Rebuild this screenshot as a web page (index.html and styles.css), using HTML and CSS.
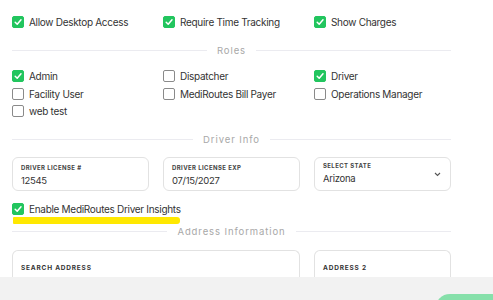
FILE: index.html
```html
<!DOCTYPE html>
<html lang="en">
<head>
    <meta charset="UTF-8">
    <meta name="viewport" content="width=device-width, initial-scale=1.0">
    <title>Driver Settings</title>
    <link rel="stylesheet" href="styles.css">
</head>
<body>

    <div class="page">

        <!-- Access options -->
        <div class="grid top-row">
            <label class="check"><span class="box on"></span>Allow Desktop Access</label>
            <label class="check"><span class="box on"></span>Require Time Tracking</label>
            <label class="check"><span class="box on"></span>Show Charges</label>
        </div>

        <!-- Roles -->
        <div class="divider roles-title">Roles</div>
        <div class="grid roles">
            <label class="check"><span class="box on"></span>Admin</label>
            <label class="check"><span class="box"></span>Dispatcher</label>
            <label class="check"><span class="box on"></span>Driver</label>
            <label class="check"><span class="box"></span>Facility User</label>
            <label class="check"><span class="box"></span>MediRoutes Bill Payer</label>
            <label class="check"><span class="box"></span>Operations Manager</label>
            <label class="check"><span class="box"></span>web test</label>
        </div>

        <!-- Driver Info -->
        <div class="divider driver-title">Driver Info</div>
        <div class="grid fields">
            <div class="field">
                <div class="field-label">Driver License #</div>
                <div class="field-value">12545</div>
            </div>
            <div class="field">
                <div class="field-label">Driver License Exp</div>
                <div class="field-value">07/15/2027</div>
            </div>
            <div class="field select">
                <div>
                    <div class="field-label">Select State</div>
                    <div class="field-value">Arizona</div>
                </div>
                <svg class="chevron" width="7" height="5" viewBox="0 0 7 5"><path d="M1 1l2.5 2.5L6 1" fill="none" stroke="#555" stroke-width="1.1"/></svg>
            </div>
        </div>

        <div class="insights">
            <label class="check"><span class="box on"></span>Enable MediRoutes Driver Insights</label>
            <div class="marker"></div>
        </div>

        <!-- Address Information -->
        <div class="divider address-title">Address Information</div>
        <div class="grid address">
            <div class="field tall wide">
                <div class="field-label">Search Address</div>
            </div>
            <div class="field tall">
                <div class="field-label">Address 2</div>
            </div>
        </div>

    </div>

    <!-- Footer bar -->
    <div class="footer">
        <div class="save-btn"></div>
    </div>

</body>
</html>
```

FILE: styles.css
```css
body, html {
    margin: 0;
    padding: 0;
    font-family: 'Inter', 'Noto Sans', sans-serif;
    color: #333;
    background: #fff;
    overflow: hidden;
}

.page {
    width: 439px;
    padding: 0 12px;
}

.grid {
    display: grid;
    grid-template-columns: repeat(3, 1fr);
    column-gap: 14px;
}

/* Checkboxes */
.check {
    display: flex;
    align-items: center;
    gap: 5px;
    height: 17.5px;
    font-size: 10px;
    letter-spacing: -0.3px;
    color: #333;
    white-space: nowrap;
}

.box {
    width: 10px;
    height: 10px;
    border: 1px solid #8a8a8a;
    border-radius: 2px;
    flex-shrink: 0;
}

.box.on {
    border-color: #22c55e;
    background: #22c55e url("data:image/svg+xml;utf8,<svg xmlns='http://www.w3.org/2000/svg' viewBox='0 0 10 10'><path d='M2.2 5.2l2 2 3.8-4.4' fill='none' stroke='white' stroke-width='1.5' stroke-linecap='round' stroke-linejoin='round'/></svg>") center/10px no-repeat;
}

.top-row {
    padding-top: 13px;
}

/* Section dividers */
.divider {
    display: flex;
    align-items: center;
    gap: 10px;
    font-size: 9.5px;
    letter-spacing: 0.9px;
    color: #a8a8a8;
    height: 14px;
}

.divider::before,
.divider::after {
    content: "";
    flex: 1;
    height: 1px;
    background: #ebebf0;
}

.roles-title {
    margin-top: 13px;
    margin-bottom: 10px;
}

.driver-title {
    margin-top: 12px;
    margin-bottom: 11px;
}

.address-title {
    margin-top: 1px;
    margin-bottom: 11px;
}

/* Fields */
.field {
    height: 34px;
    box-sizing: border-box;
    border: 1px solid #e2e2e2;
    border-radius: 6px;
    padding: 6px 8px 0;
}

.field-label {
    font-size: 6px;
    font-weight: 700;
    letter-spacing: 0.4px;
    text-transform: uppercase;
    color: #444;
    line-height: 8px;
}

.field-value {
    font-size: 9.5px;
    letter-spacing: -0.3px;
    line-height: 14px;
    margin-top: 2px;
    color: #333;
}

.select {
    display: flex;
    justify-content: space-between;
    align-items: center;
    padding-top: 0;
    padding-right: 9px;
}

.field.tall {
    height: 40px;
    border-bottom: none;
    border-radius: 6px 6px 0 0;
    padding-top: 13px;
}

.field.tall .field-label {
    font-size: 6.5px;
    letter-spacing: 0.8px;
    color: #333;
}

.wide {
    grid-column: span 2;
}

/* Insights checkbox */
.insights {
    margin-top: 9px;
}

.marker {
    width: 167px;
    height: 7px;
    margin-left: 1px;
    margin-top: -1px;
    background: #ffe800;
    border-radius: 1px 3px 3px 1px;
}

/* Footer */
.footer {
    position: fixed;
    left: 0;
    right: 0;
    bottom: 0;
    height: 23px;
    background: #f2f2f2;
}

.save-btn {
    position: absolute;
    left: 435px;
    top: 17px;
    width: 72px;
    height: 30px;
    border-radius: 15px;
    background: #86e0aa;
}
```
